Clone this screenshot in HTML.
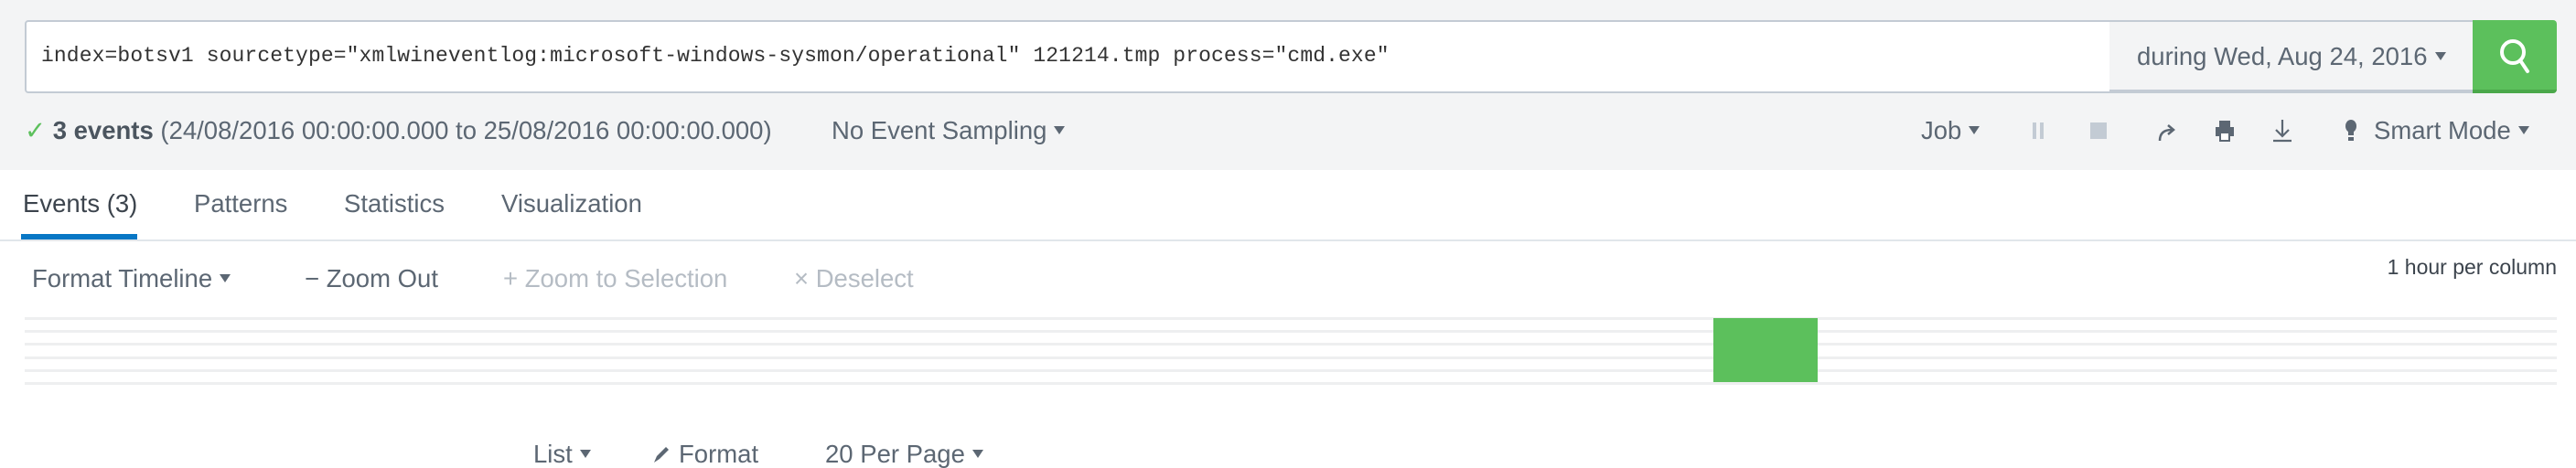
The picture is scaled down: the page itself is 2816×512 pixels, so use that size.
<!DOCTYPE html>
<html><head><meta charset="utf-8"><style>
*{margin:0;padding:0;box-sizing:border-box}
body{width:2816px;height:510px;background:#fff;position:relative;overflow:hidden;font-family:"Liberation Sans",sans-serif;color:#5c6773}
.a{position:absolute;white-space:nowrap;line-height:1}
.t{font-size:27.5px}
.car{display:inline-block;width:0;height:0;border-left:6px solid transparent;border-right:6px solid transparent;border-top:9px solid currentColor;vertical-align:middle;margin-left:8px;position:relative;top:-2px}
.gl{position:absolute;left:27px;width:2768px;height:3px;background:#eeeff0}
</style></head><body>
<div class="a" style="left:0;top:0;width:2816px;height:186px;background:#f3f4f5"></div>
<div class="a" style="left:27px;top:22px;width:2280px;height:80px;background:#fff;border:2px solid #c3cbd4;border-right:1px solid #c3cbd4;border-radius:4px 0 0 4px"></div>
<div class="a" style="left:45px;top:50px;font-family:'Liberation Mono',monospace;font-size:23px;letter-spacing:0.1px;color:#333">index=botsv1 sourcetype="xmlwineventlog:microsoft-windows-sysmon/operational" 121214.tmp process="cmd.exe"</div>
<div class="a" style="left:2306px;top:22px;width:398px;height:80px;background:#f3f4f5;border-top:2px solid #c3cbd4;border-bottom:4px solid #c3cbd4"></div>
<div class="a t" style="left:2336px;top:48px">during Wed, Aug 24, 2016<span class="car"></span></div>
<div class="a" style="left:2703px;top:22px;width:92px;height:80px;background:#5cc05c;border-bottom:4px solid #4aa84a;border-radius:0 4px 4px 0"></div>
<svg class="a" style="left:2730px;top:40px" width="40" height="44" viewBox="0 0 40 44"><circle cx="17" cy="17" r="12" fill="none" stroke="#fff" stroke-width="4"/><line x1="25" y1="26" x2="33" y2="38" stroke="#fff" stroke-width="4" stroke-linecap="round"/></svg>

<div class="a t" style="left:27px;top:129px"><span style="color:#5cc05c">✓</span> <b style="color:#4b555f">3 events</b> (24/08/2016 00:00:00.000 to 25/08/2016 00:00:00.000)</div>
<div class="a t" style="left:909px;top:129px">No Event Sampling<span class="car"></span></div>
<div class="a t" style="left:2100px;top:129px">Job<span class="car"></span></div>
<div class="a" style="left:2222px;top:134px;width:4px;height:18px;background:#c3cbd4"></div>
<div class="a" style="left:2230px;top:134px;width:4px;height:18px;background:#c3cbd4"></div>
<div class="a" style="left:2285px;top:134px;width:18px;height:18px;background:#c3cbd4"></div>
<svg class="a" style="left:2358px;top:132px" width="22" height="24" viewBox="0 0 22 24"><path d="M3 22 Q3 10 16 10" fill="none" stroke="#5c6773" stroke-width="2.5"/><path d="M12 5 L18 10 L12 15" fill="none" stroke="#5c6773" stroke-width="2.5"/></svg>
<svg class="a" style="left:2421px;top:131px" width="22" height="24" viewBox="0 0 22 24"><rect x="5" y="1" width="12" height="7" fill="#5c6773"/><rect x="1" y="8" width="20" height="10" fill="#5c6773"/><rect x="6" y="14" width="10" height="9" fill="#fff" stroke="#5c6773" stroke-width="2"/></svg>
<svg class="a" style="left:2484px;top:130px" width="22" height="26" viewBox="0 0 22 26"><path d="M11 1 V19 M4 12 L11 19 L18 12 M1 24 H21" fill="none" stroke="#5c6773" stroke-width="2.2"/></svg>
<svg class="a" style="left:2563px;top:130px" width="14" height="26" viewBox="0 0 14 26"><ellipse cx="7" cy="8" rx="6" ry="7" fill="#5c6773"/><rect x="4" y="12" width="6" height="6" fill="#5c6773"/><rect x="4" y="20" width="6" height="4" fill="#5c6773"/></svg>
<div class="a t" style="left:2595px;top:129px">Smart Mode<span class="car"></span></div>

<div class="a t" style="left:25px;top:209px;color:#3c444d">Events (3)</div>
<div class="a t" style="left:212px;top:209px">Patterns</div>
<div class="a t" style="left:376px;top:209px">Statistics</div>
<div class="a t" style="left:548px;top:209px">Visualization</div>
<div class="a" style="left:0;top:262px;width:2816px;height:2px;background:#e1e6eb"></div>
<div class="a" style="left:23px;top:256px;width:127px;height:6px;background:#0877c5"></div>

<div class="a t" style="left:35px;top:291px">Format Timeline<span class="car"></span></div>
<div class="a t" style="left:333px;top:291px">− Zoom Out</div>
<div class="a t" style="left:550px;top:291px;color:#b5bcc4">+ Zoom to Selection</div>
<div class="a t" style="left:868px;top:291px;color:#b5bcc4">× Deselect</div>
<div class="a" style="right:21px;top:281px;font-size:23px;color:#3c444d">1 hour per column</div>

<div class="gl" style="top:347px"></div>
<div class="gl" style="top:361px"></div>
<div class="gl" style="top:375px"></div>
<div class="gl" style="top:390px"></div>
<div class="gl" style="top:404px"></div>
<div class="gl" style="top:418px"></div>
<div class="a" style="left:1873px;top:348px;width:114px;height:70px;background:#5cc05c"></div>

<div class="a t" style="left:583px;top:483px">List<span class="car"></span></div>
<svg class="a" style="left:712px;top:486px" width="22" height="22" viewBox="0 0 22 22"><path d="M3 20 L6 13 L16 3 L19 6 L9 16 Z" fill="#5c6773"/></svg>
<div class="a t" style="left:742px;top:483px">Format</div>
<div class="a t" style="left:902px;top:483px">20 Per Page<span class="car"></span></div>
</body></html>
